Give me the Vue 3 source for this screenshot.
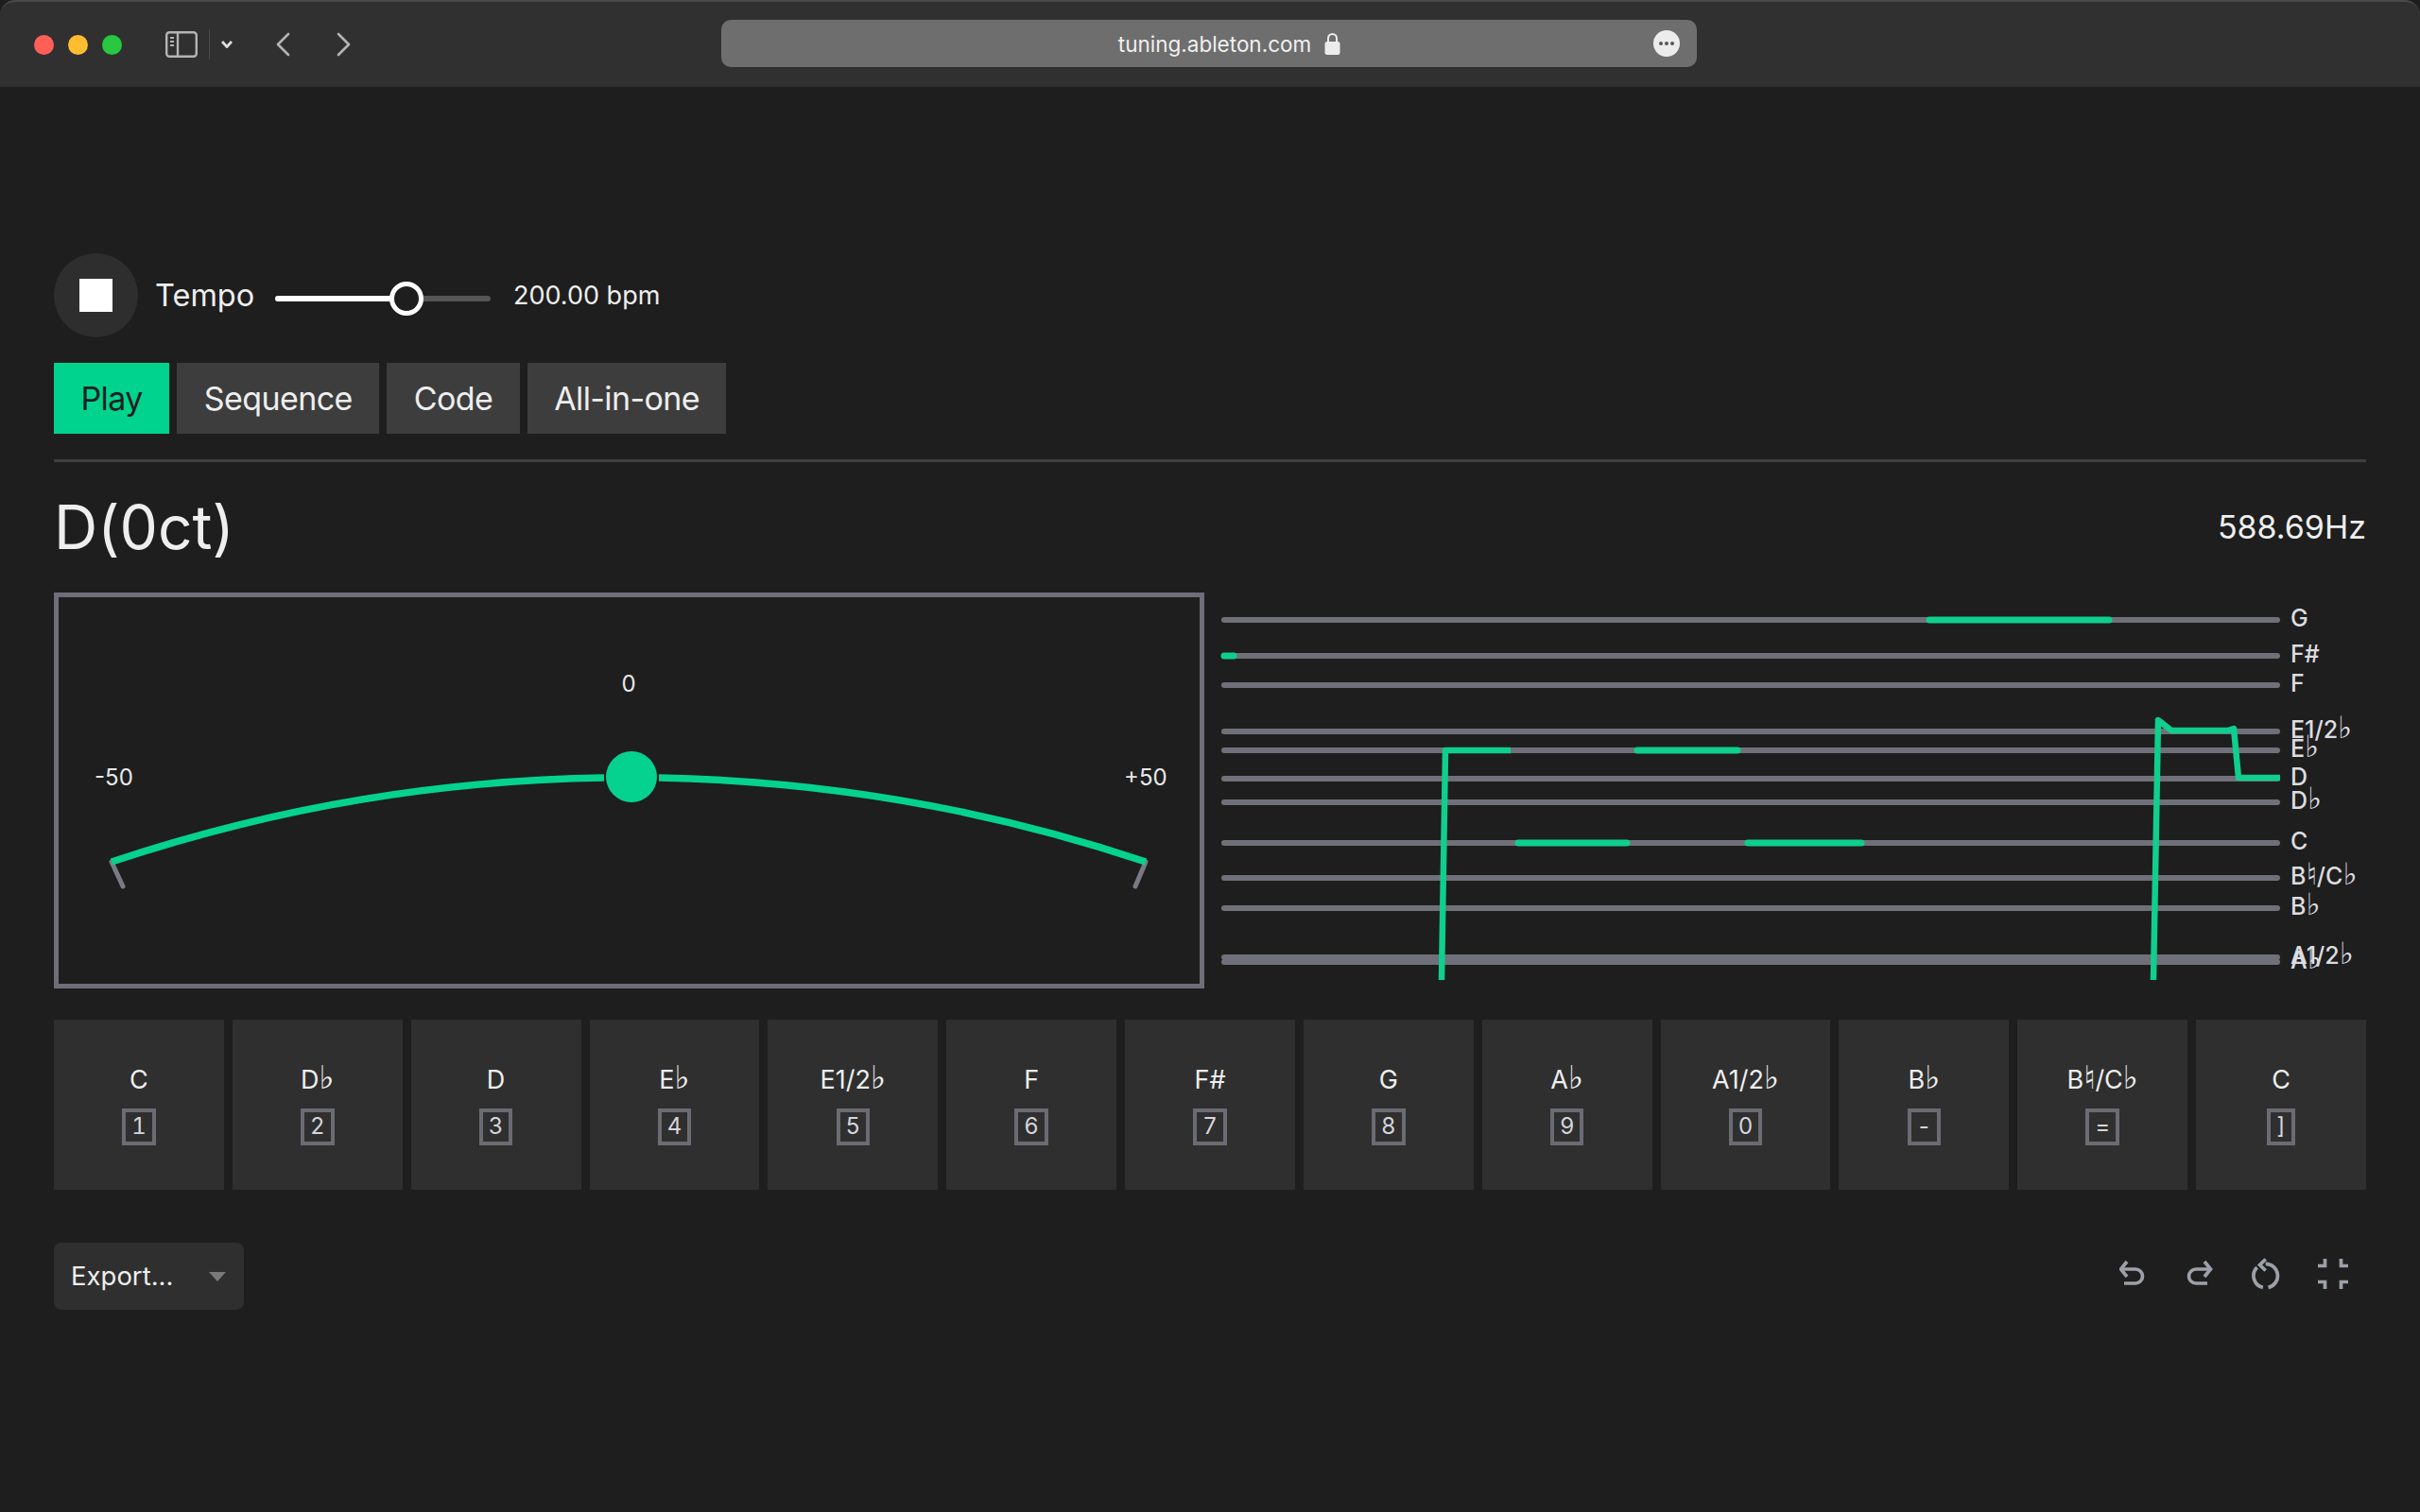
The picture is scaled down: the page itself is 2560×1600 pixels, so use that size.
<template>
  <div class="window">
    <header class="toolbar">
      <div class="lights">
        <span class="light red"></span>
        <span class="light yellow"></span>
        <span class="light green"></span>
      </div>
      <svg class="sidebar-icon" viewBox="0 0 34 28" width="34" height="28" fill="none" stroke="#b4b4b4" stroke-width="2.4">
        <rect x="1.2" y="1.2" width="31.6" height="25.6" rx="3" />
        <path d="M13 1.2v25.6" />
        <path d="M5 7h4M5 11h4M5 15h4" stroke-width="2" />
      </svg>
      <span class="tool-sep"></span>
      <svg class="chevron" viewBox="0 0 12 8" width="12" height="8" fill="none" stroke="#dcdcdc" stroke-width="2.8">
        <path d="M1 1l5 5.5L11 1" />
      </svg>
      <svg class="nav back" viewBox="0 0 16 26" width="16" height="26" fill="none" stroke="#b4b4b4" stroke-width="2.6" stroke-linecap="round" stroke-linejoin="round">
        <path d="M14 2L3 13l11 11" />
      </svg>
      <svg class="nav forward" viewBox="0 0 16 26" width="16" height="26" fill="none" stroke="#b4b4b4" stroke-width="2.6" stroke-linecap="round" stroke-linejoin="round">
        <path d="M2 2l11 11L2 24" />
      </svg>
      <div class="urlbar">
        <span class="url">tuning.ableton.com</span>
        <svg class="lock" viewBox="0 0 17 24" width="17" height="24">
          <path d="M4 11V6.5a4.5 4.5 0 0 1 9 0V11" fill="none" stroke="#ececec" stroke-width="2" />
          <rect x="0.5" y="10" width="16" height="14" rx="2.5" fill="#ececec" />
        </svg>
        <span class="more"><i></i><i></i><i></i></span>
      </div>
    </header>

    <main class="page">
      <div class="transport">
        <button class="stop"><span class="stop-square"></span></button>
        <span class="tempo-label">Tempo</span>
        <div class="slider">
          <div class="slider-fill" :style="{ width: tempoPercent + '%' }"></div>
          <div class="slider-thumb" :style="{ left: tempoPercent + '%' }"></div>
        </div>
        <span class="bpm">200.00 bpm</span>
      </div>

      <nav class="tabs">
        <button v-for="tab in tabs" :key="tab" class="tab" :class="{ active: tab === 'Play' }">{{ tab }}</button>
      </nav>

      <div class="readout">
        <span class="pitch">D(0ct)</span>
        <span class="hertz">588.69Hz</span>
      </div>

      <div class="scopes">
        <div class="gauge">
          <svg viewBox="0 0 1207 409" width="1207" height="409">
            <text class="gauge-label" x="603" y="100" text-anchor="middle">0</text>
            <text class="gauge-label" x="38" y="199">-50</text>
            <text class="gauge-label" x="1127" y="199">+50</text>
            <path d="M56 280L68 306" class="tick" />
            <path d="M1150 280L1139 306" class="tick" />
            <path d="M56 280A1725 1725 0 0 1 577 191" class="arc" />
            <path d="M635 191A1725 1725 0 0 1 1150 280" class="arc" />
            <circle cx="606" cy="190" r="27" fill="#05d28e" />
          </svg>
        </div>

        <svg class="chart" viewBox="0 0 1229 419" width="1229" height="419">
          <g v-for="line in staffLines" :key="line.label">
            <path :d="`M21 ${line.y}H1135`" class="staff" />
            <text class="staff-label" x="1149" :y="line.y + 6.5">
              <tspan v-for="part in splitNote(line.label)" :key="part.id" :class="{ accidental: part.accidental }">{{ part.text }}</tspan>
            </text>
          </g>
          <path v-for="note in greenNotes" :key="note.x1" :d="`M${note.x1} ${note.y}H${note.x2}`" class="note" />
          <path d="M251 410L255 167H324" class="trace" />
          <path d="M1004 410L1009 135L1023 146H1083L1089 144L1094 196H1138" class="trace" />
        </svg>
      </div>

      <div class="keys">
        <button v-for="key in keys" :key="key.note + key.code" class="key">
          <span class="key-note">
            <span v-for="part in splitNote(key.note)" :key="part.id" :class="{ accidental: part.accidental }">{{ part.text }}</span>
          </span>
          <span class="key-code">{{ key.code }}</span>
        </button>
      </div>

      <div class="footer">
        <button class="export">
          <span>Export...</span>
          <span class="caret"></span>
        </button>
        <div class="actions">
          <svg viewBox="0 0 30 30" width="30" height="30" class="action" fill="none">
            <path d="M8 2L1.5 10 8 18" />
            <path d="M2 10H17a7.5 7.5 0 0 1 0 15H5" />
          </svg>
          <svg viewBox="0 0 30 30" width="30" height="30" class="action" fill="none">
            <path d="M20 2L26.5 10 20 18" />
            <path d="M26 10H11a7.5 7.5 0 0 0 0 15H23" />
          </svg>
          <svg viewBox="0 0 30 34" width="30" height="34" class="action" fill="none">
            <path d="M14.7 1.5L8.5 7.5 14.7 13.5" />
            <path d="M14.7 6.3A12.7 12.7 0 0 1 17.5 31.4" />
            <path d="M11.9 31.4A12.7 12.7 0 0 1 5.6 10.1" />
          </svg>
          <svg viewBox="0 0 32 32" width="32" height="32" class="action" fill="none">
            <path d="M7.5 0V7.5H0M24.5 0V7.5H32M7.5 32V24.5H0M24.5 32V24.5H32" />
          </svg>
        </div>
      </div>
    </main>
  </div>
</template>

<script setup>
const tabs = ['Play', 'Sequence', 'Code', 'All-in-one']

const tempoPercent = 61

const staffLines = [
  { label: 'G', y: 29 },
  { label: 'F#', y: 67 },
  { label: 'F', y: 98 },
  { label: 'E1/2♭', y: 147 },
  { label: 'E♭', y: 167 },
  { label: 'D', y: 197 },
  { label: 'D♭', y: 222 },
  { label: 'C', y: 265 },
  { label: 'B♮/C♭', y: 302 },
  { label: 'B♭', y: 334 },
  { label: 'A1/2♭', y: 386 },
  { label: 'A♭', y: 391 },
]

const greenNotes = [
  { x1: 767, x2: 957, y: 29 },
  { x1: 21, x2: 31, y: 67 },
  { x1: 458, x2: 564, y: 167 },
  { x1: 332, x2: 447, y: 265 },
  { x1: 575, x2: 695, y: 265 },
]

const keys = [
  { note: 'C', code: '1' },
  { note: 'D♭', code: '2' },
  { note: 'D', code: '3' },
  { note: 'E♭', code: '4' },
  { note: 'E1/2♭', code: '5' },
  { note: 'F', code: '6' },
  { note: 'F#', code: '7' },
  { note: 'G', code: '8' },
  { note: 'A♭', code: '9' },
  { note: 'A1/2♭', code: '0' },
  { note: 'B♭', code: '-' },
  { note: 'B♮/C♭', code: '=' },
  { note: 'C', code: ']' },
]

// the flat and natural signs come out too small at the text size
function splitNote(label) {
  return label.split(/([♭♮])/).filter(Boolean).map((text, id) => ({
    id,
    text,
    accidental: text === '♭' || text === '♮',
  }))
}
</script>

<style>
html,
body {
  margin: 0;
  background: #1e1e1e;
}
</style>

<style scoped>
.window {
  width: 2560px;
  height: 1600px;
  overflow: hidden;
  background: #1e1e1e;
  color: #eeeeee;
  font-family: Inter, "DejaVu Sans", sans-serif;
}

button {
  font-family: inherit;
  border: none;
  padding: 0;
  color: inherit;
}

.toolbar {
  box-sizing: border-box;
  height: 92px;
  padding-left: 36px;
  display: flex;
  align-items: center;
  background: #303030;
  border-top: 2px solid #4a4a4a;
  border-radius: 16px 16px 0 0;
}

.lights {
  display: flex;
  gap: 15px;
  margin-right: 46px;
}

.light {
  width: 21px;
  height: 21px;
  border-radius: 50%;
}

.red { background: #ff5f57; }
.yellow { background: #febc2e; }
.green { background: #28c840; }

.tool-sep {
  width: 1px;
  height: 32px;
  background: #4a4a4a;
  margin-left: 12px;
}

.chevron {
  margin-left: 12px;
}

.nav.back {
  margin-left: 45px;
}

.nav.forward {
  margin-left: 49px;
}

.urlbar {
  box-sizing: border-box;
  position: relative;
  width: 1032px;
  height: 50px;
  margin-top: -2px;
  margin-left: 391px;
  padding-left: 43px;
  display: flex;
  align-items: center;
  justify-content: center;
  gap: 14px;
  background: #6e6e6e;
  border-radius: 10px;
}

.url {
  font-size: 22.5px;
  color: #f0f0f0;
}

.more {
  position: absolute;
  right: 18px;
  top: 11px;
  width: 28px;
  height: 28px;
  border-radius: 50%;
  background: #ececec;
  display: flex;
  align-items: center;
  justify-content: center;
  gap: 2px;
}

.more i {
  width: 4px;
  height: 4px;
  border-radius: 50%;
  background: #555;
}

.page {
  padding: 176px 57px 0;
}

.transport {
  height: 89px;
  display: flex;
  align-items: center;
}

.stop {
  width: 89px;
  height: 89px;
  border-radius: 50%;
  background: #2e2e2e;
  display: flex;
  align-items: center;
  justify-content: center;
}

.stop-square {
  width: 35px;
  height: 35px;
  background: #ffffff;
}

.tempo-label {
  margin-left: 18px;
  font-size: 32.5px;
  width: 127px;
}

.slider {
  position: relative;
  width: 228px;
  height: 6px;
  margin-top: 6px;
  border-radius: 3px;
  background: #555555;
}

.slider-fill {
  height: 100%;
  border-radius: 3px;
  background: #ffffff;
}

.slider-thumb {
  box-sizing: border-box;
  position: absolute;
  top: 50%;
  width: 36px;
  height: 36px;
  margin: -18px 0 0 -18px;
  border: 5px solid #ffffff;
  border-radius: 50%;
  background: #1e1e1e;
}

.bpm {
  margin-left: 24px;
  font-size: 27px;
}

.tabs {
  display: flex;
  gap: 8px;
  margin-top: 27px;
  padding-bottom: 27px;
  border-bottom: 3px solid #3f3f3f;
}

.tab {
  height: 75px;
  padding: 0 28.5px;
  font-size: 34px;
  letter-spacing: -0.6px;
  background: #3d3d3d;
}

.tab.active {
  background: #00d38d;
  color: #1e1e1e;
}

.readout {
  height: 138px;
  padding-bottom: 2px;
  box-sizing: border-box;
  display: flex;
  align-items: center;
  justify-content: space-between;
}

.pitch {
  font-size: 64px;
}

.hertz {
  font-size: 34px;
}

.scopes {
  display: flex;
}

.gauge {
  width: 1207px;
  height: 409px;
  border: 5px solid #6e6e78;
}

.gauge svg,
.chart {
  display: block;
}

.gauge-label {
  font-size: 24px;
  fill: #e8e8e8;
}

.tick {
  stroke: #7a7a82;
  stroke-width: 5;
  stroke-linecap: round;
  fill: none;
}

.arc {
  stroke: #05d28e;
  stroke-width: 7.5;
  fill: none;
}

.staff {
  stroke: #6f7079;
  stroke-width: 6;
  stroke-linecap: round;
  fill: none;
}

.staff-label {
  font-size: 25px;
  font-weight: 500;
  fill: #dcdce0;
}

.staff-label .accidental {
  font-size: 32px;
  font-weight: 400;
}

.note {
  stroke: #0fce8e;
  stroke-width: 7;
  stroke-linecap: round;
  fill: none;
}

.trace {
  stroke: #0fce8e;
  stroke-width: 6.5;
  stroke-linejoin: round;
  fill: none;
}

.keys {
  display: grid;
  grid-template-columns: repeat(13, 1fr);
  gap: 9px;
  margin-top: 33px;
}

.key {
  height: 180px;
  background: #2f2f2f;
  display: flex;
  flex-direction: column;
  align-items: center;
  justify-content: center;
  gap: 14px;
}

.key-note {
  height: 33px;
  line-height: 33px;
  font-size: 27px;
}

.key-note .accidental {
  font-size: 34px;
  line-height: 0;
}

.key-code {
  box-sizing: border-box;
  min-width: 30px;
  height: 39px;
  padding: 0 6px;
  font-size: 24px;
  line-height: 30px;
  font-variant-numeric: tabular-nums;
  color: #d4d4da;
  border: 4px solid #6b6b73;
}

.footer {
  display: flex;
  align-items: center;
  justify-content: space-between;
  margin-top: 56px;
  padding-right: 19px;
}

.export {
  box-sizing: border-box;
  width: 201px;
  height: 71px;
  padding: 0 19px 2px 18px;
  display: flex;
  align-items: center;
  justify-content: space-between;
  font-size: 27.5px;
  background: #2f2f2f;
  border-radius: 8px;
}

.caret {
  width: 0;
  height: 0;
  margin-top: 2px;
  border-left: 9px solid transparent;
  border-right: 9px solid transparent;
  border-top: 10px solid #7a7a7a;
}

.actions {
  display: flex;
  align-items: center;
  gap: 40px;
  margin-bottom: 5px;
}

.action path {
  stroke: #9ca0a8;
  stroke-width: 3.7;
}
</style>
